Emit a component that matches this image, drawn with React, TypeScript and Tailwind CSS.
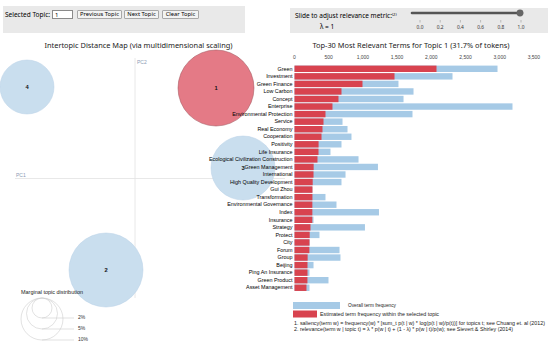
import React from 'react';

type Term = { name: string; total: number; est: number };

const terms: Term[] = [
  { name: 'Green', total: 2968, est: 2076 },
  { name: 'Investment', total: 2310, est: 1462 },
  { name: 'Green Finance', total: 1520, est: 994 },
  { name: 'Low Carbon', total: 1740, est: 687 },
  { name: 'Concept', total: 1594, est: 643 },
  { name: 'Enterprise', total: 3187, est: 555 },
  { name: 'Environmental Protection', total: 1725, est: 453 },
  { name: 'Service', total: 702, est: 424 },
  { name: 'Real Economy', total: 775, est: 409 },
  { name: 'Cooperation', total: 833, est: 395 },
  { name: 'Positivity', total: 687, est: 352 },
  { name: 'Life Insurance', total: 526, est: 351 },
  { name: 'Ecological Civilization Construction', total: 936, est: 336 },
  { name: 'Green Management', total: 1220, est: 280 },
  { name: 'International', total: 746, est: 278 },
  { name: 'High Quality Development', total: 687, est: 266 },
  { name: 'Gui Zhou', total: 262, est: 262 },
  { name: 'Transformation', total: 453, est: 262 },
  { name: 'Environmental Governance', total: 614, est: 261 },
  { name: 'Index', total: 1235, est: 261 },
  { name: 'Insurance', total: 278, est: 260 },
  { name: 'Strategy', total: 1030, est: 234 },
  { name: 'Protect', total: 365, est: 222 },
  { name: 'City', total: 222, est: 219 },
  { name: 'Forum', total: 658, est: 217 },
  { name: 'Group', total: 672, est: 192 },
  { name: 'Beijing', total: 278, est: 190 },
  { name: 'Ping An Insurance', total: 219, est: 190 },
  { name: 'Green Product', total: 497, est: 189 },
  { name: 'Asset Management', total: 219, est: 175 },
];

const topics = [
  { id: 4, cx: 27, cy: 87, r: 27, selected: false },
  { id: 2, cx: 106, cy: 270, r: 37, selected: false },
  { id: 3, cx: 243, cy: 168, r: 32, selected: false },
  { id: 1, cx: 216, cy: 88, r: 38, selected: true },
];

// bar chart scale
const X0 = 294.5;
const K = 0.0684;
const ROW_TOP = 65.6;
const ROW_STEP = 7.55;
const BAR_H = 6.4;
const ticks = [0, 500, 1000, 1500, 2000, 2500, 3000, 3500];

const sliderTicks = ['0.0', '0.2', '0.4', '0.6', '0.8', '1.0'];

const legendSizes = [
  { r: 10, label: '2%' },
  { r: 15.5, label: '5%' },
  { r: 21, label: '10%' },
];

const TopicControls = () => (
  <div className="ml-[3px] mt-[6px] flex h-[27px] w-[242px] items-start bg-[#e9e9e9] pl-[2px] pt-[4px] text-[6.5px] leading-[9px] text-black">
    <span className="w-[47px] whitespace-nowrap">Selected Topic:</span>
    <input
      readOnly
      value="1"
      className="h-[9px] w-[21px] border border-[#8a8a8a] bg-white px-[2px] text-[6px] leading-[7px] outline-none"
    />
    <button className="ml-[4px] h-[9px] w-[45px] whitespace-nowrap rounded-[1px] border border-[#a8a8a8] bg-[#f3f3f3] px-0 text-[5.8px] leading-[7px]">
      Previous Topic
    </button>
    <button className="ml-[2px] h-[9px] w-[35px] whitespace-nowrap rounded-[1px] border border-[#a8a8a8] bg-[#f3f3f3] px-0 text-[5.8px] leading-[7px]">
      Next Topic
    </button>
    <button className="ml-[3px] h-[9px] w-[37px] whitespace-nowrap rounded-[1px] border border-[#a8a8a8] bg-[#f3f3f3] px-0 text-[5.8px] leading-[7px]">
      Clear Topic
    </button>
  </div>
);

const RelevanceSlider = () => (
  <div className="ml-[45px] mt-[8px] flex h-[25px] w-[258px] bg-[#e9e9e9] text-[6.5px] leading-[8px] text-black">
    <div className="w-[115px] pl-[5px] pt-[4px]">
      <div className="whitespace-nowrap">
        Slide to adjust relevance metric:<sup className="text-[4px]">(2)</sup>
      </div>
      <div className="mt-[3px] pl-[25px]">λ = 1</div>
    </div>
    <svg width="130" height="25" className="block">
      <line x1="7" y1="5" x2="117" y2="5" stroke="#555" strokeWidth="2.6" strokeLinecap="round" />
      <circle cx="115" cy="5" r="3.4" fill="#666" />
      {sliderTicks.map((t, i) => (
        <g key={t}>
          <line x1={15 + i * 20.2} y1="12" x2={15 + i * 20.2} y2="14.5" stroke="#999" strokeWidth="0.6" />
          <text x={15 + i * 20.2} y="20.5" textAnchor="middle" fontSize="4.8" fill="#333">
            {t}
          </text>
        </g>
      ))}
    </svg>
  </div>
);

const App = () => {
  return (
    <div className="h-[345px] w-[550px] overflow-hidden bg-white font-['Noto_Sans','Open_Sans',sans-serif]">
      <div className="flex h-[33px] items-start">
        <TopicControls />
        <RelevanceSlider />
      </div>

      <div className="flex h-[19px] pt-[7px] text-[7.4px] leading-[10px] text-[#222]">
        <div className="w-[277px] text-center">Intertopic Distance Map (via multidimensional scaling)</div>
        <div className="w-[268px] text-center">Top-30 Most Relevant Terms for Topic 1 (31.7% of tokens)</div>
      </div>

      <svg
        width="550"
        height="293"
        viewBox="0 52 550 293"
        className="block overflow-visible font-['Liberation_Sans',Arial,sans-serif]"
      >
        {/* intertopic map axes */}
        <line x1="135" y1="58" x2="135" y2="298" stroke="#e2e2e2" strokeWidth="0.8" />
        <line x1="15" y1="178.5" x2="285" y2="178.5" stroke="#e2e2e2" strokeWidth="0.8" />
        <text x="137" y="63.5" fontSize="5" fill="#8b9bb4">PC2</text>
        <text x="16" y="176.5" fontSize="5" fill="#8b9bb4">PC1</text>

        {topics.map((t) => (
          <g key={t.id}>
            <circle
              cx={t.cx}
              cy={t.cy}
              r={t.r}
              fill={t.selected ? '#e47a86' : '#c9deee'}
              stroke={t.selected ? '#9a4a52' : '#b9d1e6'}
              strokeWidth="0.5"
            />
            <text x={t.cx} y={t.cy + 2} textAnchor="middle" fontSize="5.8" fontWeight="700" fill="#111">
              {t.id}
            </text>
          </g>
        ))}

        {/* marginal topic distribution */}
        <text x="21" y="294" fontSize="5" textLength="62" lengthAdjust="spacingAndGlyphs" fill="#222">
          Marginal topic distribution
        </text>
        {legendSizes.map((s) => (
          <g key={s.label}>
            <circle cx="42" cy={298 + s.r} r={s.r} fill="none" stroke="#cfcfcf" strokeWidth="0.6" />
            <line x1="42" y1={298 + 2 * s.r} x2="74" y2={298 + 2 * s.r} stroke="#cfcfcf" strokeWidth="0.6" />
            <text x="78" y={298 + 2 * s.r + 0.5} fontSize="5" fill="#333">
              {s.label}
            </text>
          </g>
        ))}

        {/* bar chart axis */}
        {ticks.map((v) => (
          <text key={v} x={X0 + v * K} y="58.8" textAnchor="middle" fontSize="5" fill="#444">
            {v.toLocaleString('en-US')}
          </text>
        ))}

        {terms.map((t, i) => {
          const y = ROW_TOP + i * ROW_STEP;
          return (
            <g key={t.name}>
              <rect x={X0} y={y} width={t.total * K} height={BAR_H} fill="#a6cae6" />
              <rect x={X0} y={y} width={t.est * K} height={BAR_H} fill="#d8434f" />
              <text x={X0 - 2} y={y + 4.9} textAnchor="end" fontSize="5.4" fill="#000">
                {t.name}
              </text>
            </g>
          );
        })}

        {/* legend */}
        <rect x="293" y="302" width="47" height="7" fill="#a6cae6" />
        <text x="348" y="307.2" fontSize="5" textLength="48" lengthAdjust="spacingAndGlyphs" fill="#222">
          Overall term frequency
        </text>
        <rect x="293" y="310.5" width="24" height="7" fill="#d8434f" />
        <text x="320" y="315.8" fontSize="5" textLength="119" lengthAdjust="spacingAndGlyphs" fill="#222">
          Estimated term frequency within the selected topic
        </text>
        <text x="294" y="324.8" fontSize="4.6" textLength="251" lengthAdjust="spacingAndGlyphs" fill="#222">
          1. saliency(term w) = frequency(w) * [sum_t p(t | w) * log(p(t | w)/p(t))] for topics t; see Chuang et. al (2012)
        </text>
        <text x="294" y="330.8" fontSize="4.6" textLength="219" lengthAdjust="spacingAndGlyphs" fill="#222">
          2. relevance(term w | topic t) = λ * p(w | t) + (1 - λ) * p(w | t)/p(w); see Sievert &amp; Shirley (2014)
        </text>
      </svg>
    </div>
  );
};

export default App;
